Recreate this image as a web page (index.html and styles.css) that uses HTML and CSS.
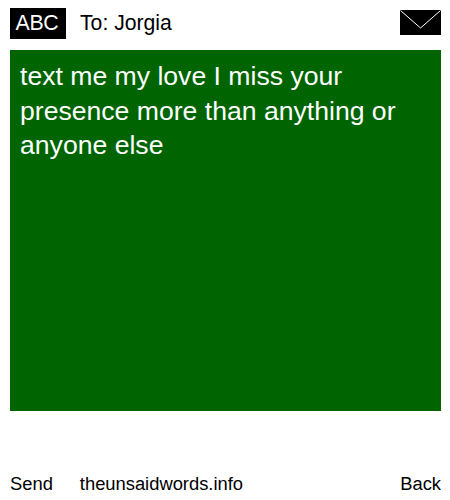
FILE: index.html
```html
<!DOCTYPE html>
<html lang="en">
<head>
    <meta charset="UTF-8">
    <title>The Unsaid Words</title>
    <link rel="stylesheet" href="styles.css">
</head>
<body>
    <div class="container">
        <div class="header">
            <div class="abc">ABC</div>
            <div class="to">To: Jorgia</div>
            <svg class="envelope" width="41" height="25" viewBox="0 0 41 25">
                <rect width="41" height="25" fill="#000"/>
                <path d="M0.5 0.5 L20.5 18 L40.5 0.5" fill="none" stroke="#fff" stroke-width="1"/>
            </svg>
        </div>
        <div class="message">text me my love I miss your presence more than anything or anyone else</div>
        <div class="footer">
            <a class="send">Send</a>
            <a class="site">theunsaidwords.info</a>
            <a class="back">Back</a>
        </div>
    </div>
</body>
</html>
```

FILE: styles.css
```css
body {
    font-family: "Liberation Sans", Arial, sans-serif;
    margin: 0;
    background-color: #fff;
    color: #000;
}
.container {
    width: 431px;
    height: 500px;
    padding: 8px 9px 0 10px;
    display: flex;
    flex-direction: column;
}
.header {
    display: flex;
    align-items: flex-start;
    height: 31px;
    margin-bottom: 11px;
}
.abc {
    width: 54px;
    height: 31px;
    padding-right: 2px;
    line-height: 30px;
    text-align: center;
    letter-spacing: -0.3px;
    background-color: #000;
    color: #fff;
    font-size: 21.33px;
}
.to {
    margin-left: 14px;
    font-size: 21.2px;
    line-height: 30px;
    flex: 1;
}
.envelope {
    display: block;
    margin-top: 2px;
}
.message {
    height: 342px;
    padding: 9px 10px 10px;
    background-color: #006400;
    color: #fff;
    font-size: 26.6px;
    line-height: 34.5px;
}
.footer {
    display: flex;
    margin-top: 62px;
    font-size: 18.35px;
    line-height: 22px;
}
.site {
    margin-left: 27px;
    flex: 1;
}
```
